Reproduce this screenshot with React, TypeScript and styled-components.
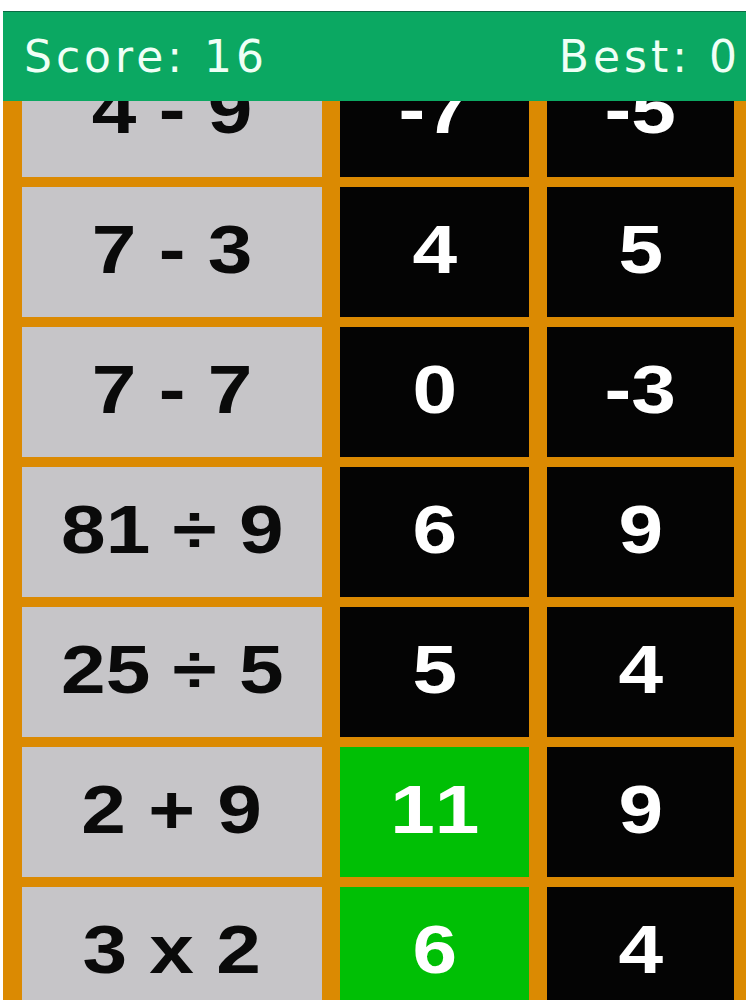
import { Fragment } from 'react';
import styled, { createGlobalStyle } from 'styled-components';

type Tone = 'question' | 'answer' | 'correct';

type Row = {
  question: string;
  answers: { value: string; correct?: boolean }[];
};

const ROWS: Row[] = [
  { question: '4 - 9', answers: [{ value: '-7' }, { value: '-5' }] },
  { question: '7 - 3', answers: [{ value: '4' }, { value: '5' }] },
  { question: '7 - 7', answers: [{ value: '0' }, { value: '-3' }] },
  { question: '81 ÷ 9', answers: [{ value: '6' }, { value: '9' }] },
  { question: '25 ÷ 5', answers: [{ value: '5' }, { value: '4' }] },
  { question: '2 + 9', answers: [{ value: '11', correct: true }, { value: '9' }] },
  { question: '3 x 2', answers: [{ value: '6', correct: true }, { value: '4' }] },
];

const GlobalStyle = createGlobalStyle`
  html, body {
    margin: 0;
    padding: 0;
    background: #ffffff;
    overflow: hidden;
  }
  body {
    font-family: "Liberation Sans", Arial, sans-serif;
  }
`;

const Screen = styled.div`
  position: relative;
  width: 750px;
  height: 1000px;
  overflow: hidden;
  padding-top: 11px;
  box-sizing: border-box;
`;

const ScoreBar = styled.header`
  position: absolute;
  top: 11px;
  left: 3px;
  width: 743px;
  height: 90px;
  background: #0ba862;
  border-top: 1px solid #0b6b44;
  display: flex;
  align-items: center;
  justify-content: space-between;
  padding: 0 5px 0 21px;
  box-sizing: border-box;
  z-index: 2;
`;

const ScoreText = styled.span`
  font-family: "DejaVu Sans", "Noto Sans", sans-serif;
  font-weight: 400;
  font-size: 44px;
  color: #effff6;
  letter-spacing: 4px;
`;

const Board = styled.div`
  margin-left: 3px;
  width: 743px;
  background: #db8a02;
  padding: 36px 12px 0 19px;
  box-sizing: border-box;
  display: grid;
  grid-template-columns: 300px 189px 187px;
  grid-auto-rows: 130px;
  column-gap: 18px;
  row-gap: 10px;
`;

const toneBg: Record<Tone, string> = {
  question: '#c6c5c8',
  answer: '#040404',
  correct: '#00bf05',
};

const Cell = styled.div<{ $tone: Tone }>`
  background: ${({ $tone }) => toneBg[$tone]};
  color: ${({ $tone }) => ($tone === 'question' ? '#0a0a0a' : '#ffffff')};
  display: flex;
  align-items: center;
  justify-content: center;
`;

const CellText = styled.span`
  display: inline-block;
  font-family: "Liberation Sans", Arial, sans-serif;
  font-weight: 700;
  font-size: 68px;
  font-kerning: none;
  line-height: 1;
  white-space: pre;
  transform: translateY(-3px) scaleX(1.18);
`;

export default function App() {
  return (
    <Screen>
      <GlobalStyle />
      <ScoreBar>
        <ScoreText>Score: 16</ScoreText>
        <ScoreText>Best: 0</ScoreText>
      </ScoreBar>
      <Board>
        {ROWS.map((row) => (
          <Fragment key={row.question}>
            <Cell $tone="question">
              <CellText>{row.question}</CellText>
            </Cell>
            {row.answers.map((a, i) => (
              <Cell key={i} $tone={a.correct ? 'correct' : 'answer'}>
                <CellText>{a.value}</CellText>
              </Cell>
            ))}
          </Fragment>
        ))}
      </Board>
    </Screen>
  );
}
